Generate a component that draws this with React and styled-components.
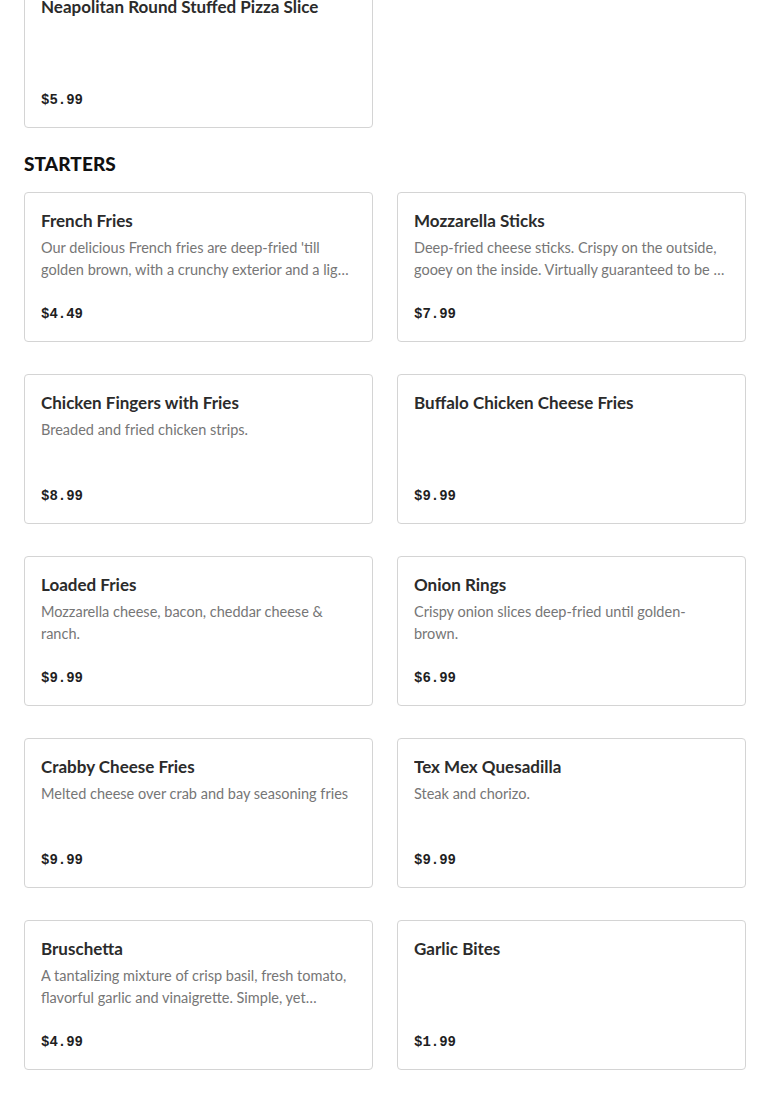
import React from "react";
import styled, { createGlobalStyle } from "styled-components";

const Global = createGlobalStyle`
  html, body { margin: 0; padding: 0; background: #ffffff; }
  body { font-family: Lato, "Liberation Sans", Arial, sans-serif; -webkit-font-smoothing: antialiased; }
  * { box-sizing: border-box; }
`;

const Page = styled.main`
  padding: 0 24px 24px;
  margin-top: -22px;
`;

const Section = styled.section`
  display: flex;
  flex-direction: column;
  margin-bottom: 24px;
`;

const Heading = styled.h2`
  margin: 0 0 16px;
  font-family: Lato, "Liberation Sans", Arial, sans-serif;
  font-size: 19px;
  line-height: 24px;
  font-weight: 900;
  color: #111111;
  letter-spacing: 0.1px;
`;

const Grid = styled.div`
  display: grid;
  grid-template-columns: 1fr 1fr;
  column-gap: 24px;
  row-gap: 32px;
`;

const Card = styled.article`
  display: flex;
  flex-direction: column;
  height: 150px;
  padding: 16px;
  border: 1px solid #d4d4d4;
  border-radius: 4px;
  background: #fff;
`;

const Title = styled.h3`
  margin: 0;
  font-family: Lato, "Liberation Sans", Arial, sans-serif;
  font-size: 17px;
  line-height: 24px;
  font-weight: 700;
  color: #2b2b2b;
  white-space: nowrap;
  overflow: hidden;
  text-overflow: ellipsis;
`;

const Desc = styled.p`
  margin: 4px 0 0;
  font-family: Lato, "Liberation Sans", Arial, sans-serif;
  font-size: 14.5px;
  line-height: 22px;
  color: #767676;
  display: -webkit-box;
  -webkit-line-clamp: 2;
  -webkit-box-orient: vertical;
  overflow: hidden;
`;

const Price = styled.span`
  margin-top: auto;
  font-family: "Liberation Mono", "Courier New", monospace;
  font-size: 14px;
  line-height: 22px;
  font-weight: 700;
  color: #1f1f1f;
`;

const MenuCard = ({ name, desc, price }) => (
  <Card>
    <Title>{name}</Title>
    {desc && <Desc>{desc}</Desc>}
    <Price>{price}</Price>
  </Card>
);

const previous = [
  { name: "Neapolitan Round Stuffed Pizza Slice", price: "$5.99" },
];

const starters = [
  { name: "French Fries", desc: "Our delicious French fries are deep-fried 'till golden brown, with a crunchy exterior and a light, fluffy interior.", price: "$4.49" },
  { name: "Mozzarella Sticks", desc: "Deep-fried cheese sticks. Crispy on the outside, gooey on the inside. Virtually guaranteed to be a hit.", price: "$7.99" },
  { name: "Chicken Fingers with Fries", desc: "Breaded and fried chicken strips.", price: "$8.99" },
  { name: "Buffalo Chicken Cheese Fries", price: "$9.99" },
  { name: "Loaded Fries", desc: "Mozzarella cheese, bacon, cheddar cheese & ranch.", price: "$9.99" },
  { name: "Onion Rings", desc: "Crispy onion slices deep-fried until golden-brown.", price: "$6.99" },
  { name: "Crabby Cheese Fries", desc: "Melted cheese over crab and bay seasoning fries", price: "$9.99" },
  { name: "Tex Mex Quesadilla", desc: "Steak and chorizo.", price: "$9.99" },
  { name: "Bruschetta", desc: "A tantalizing mixture of crisp basil, fresh tomato, flavorful garlic and vinaigrette. Simple, yet delicious.", price: "$4.99" },
  { name: "Garlic Bites", price: "$1.99" },
];

export default function App() {
  return (
    <>
      <Global />
      <Page>
        <Section>
          <Grid>
            {previous.map((item) => (
              <MenuCard key={item.name} {...item} />
            ))}
          </Grid>
        </Section>
        <Section>
          <Heading>STARTERS</Heading>
          <Grid>
            {starters.map((item) => (
              <MenuCard key={item.name} {...item} />
            ))}
          </Grid>
        </Section>
      </Page>
    </>
  );
}
